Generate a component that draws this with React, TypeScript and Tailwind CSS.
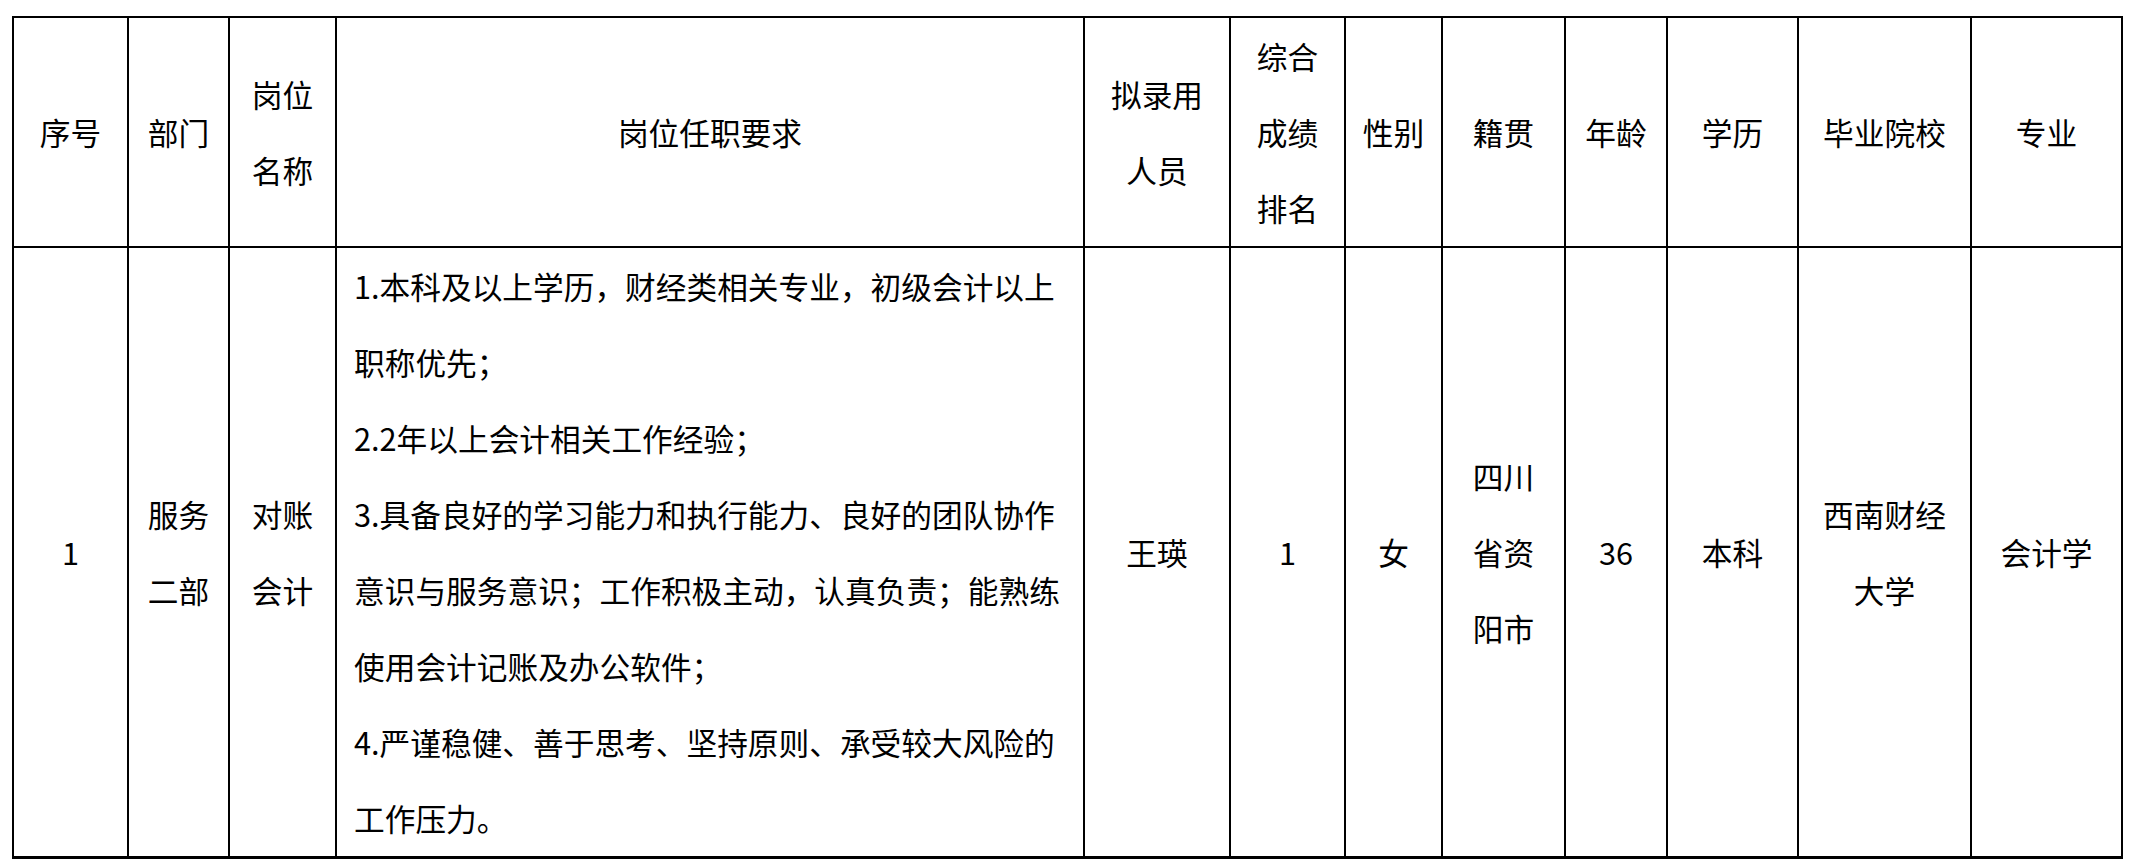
const headers: { label: string[]; w: string }[] = [
  { label: ["序号"], w: "w-[115px]" },
  { label: ["部门"], w: "w-[101px]" },
  { label: ["岗位", "名称"], w: "w-[107px]" },
  { label: ["岗位任职要求"], w: "w-[748px]" },
  { label: ["拟录用", "人员"], w: "w-[146px]" },
  { label: ["综合", "成绩", "排名"], w: "w-[115px]" },
  { label: ["性别"], w: "w-[97px]" },
  { label: ["籍贯"], w: "w-[123px]" },
  { label: ["年龄"], w: "w-[102px]" },
  { label: ["学历"], w: "w-[131px]" },
  { label: ["毕业院校"], w: "w-[173px]" },
  { label: ["专业"], w: "w-[151px]" },
]

const requirements = [
  "1.本科及以上学历，财经类相关专业，初级会计以上",
  "职称优先；",
  "2.2年以上会计相关工作经验；",
  "3.具备良好的学习能力和执行能力、良好的团队协作",
  "意识与服务意识；工作积极主动，认真负责；能熟练",
  "使用会计记账及办公软件；",
  "4.严谨稳健、善于思考、坚持原则、承受较大风险的",
  "工作压力。",
]

function Lines({ lines }: { lines: string[] }) {
  return (
    <>
      {lines.map((l, i) => (
        <div key={i} className="whitespace-nowrap">
          {l}
        </div>
      ))}
    </>
  )
}

export default function App() {
  const cell = "border-2 border-black p-0 text-center align-middle"
  const row: { lines: string[] }[] = [
    { lines: ["1"] },
    { lines: ["服务", "二部"] },
    { lines: ["对账", "会计"] },
    { lines: [] },
    { lines: ["王瑛"] },
    { lines: ["1"] },
    { lines: ["女"] },
    { lines: ["四川", "省资", "阳市"] },
    { lines: ["36"] },
    { lines: ["本科"] },
    { lines: ["西南财经", "大学"] },
    { lines: ["会计学"] },
  ]

  return (
    <div className="min-h-screen bg-white pt-[16px] pl-[12px] font-['Noto_Sans_CJK_SC','Microsoft_YaHei',sans-serif] text-[30.7px] leading-[76px] text-black">
      <table className="table-fixed border-collapse w-[2111px]">
        <colgroup>
          {headers.map((h, i) => (
            <col key={i} className={h.w} />
          ))}
        </colgroup>
        <thead>
          <tr className="h-[230px]">
            {headers.map((h, i) => (
              <th key={i} className={`${cell} font-normal`}>
                <Lines lines={h.label} />
              </th>
            ))}
          </tr>
        </thead>
        <tbody>
          <tr className="h-[610px]">
            {row.map((c, i) =>
              i === 3 ? (
                <td key={i} className="border-2 border-b-[3px] border-black p-0 pl-[17px] text-left align-middle">
                  <Lines lines={requirements} />
                </td>
              ) : (
                <td key={i} className={`${cell} border-b-[3px]`}>
                  <Lines lines={c.lines} />
                </td>
              )
            )}
          </tr>
        </tbody>
      </table>
    </div>
  )
}
